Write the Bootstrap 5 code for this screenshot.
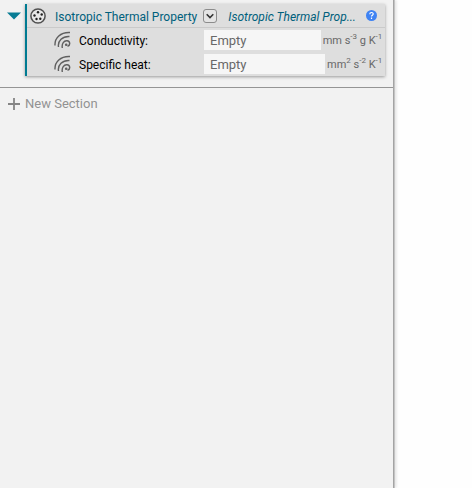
<!DOCTYPE html>
<html lang="en">
<head>
<meta charset="utf-8">
<meta name="viewport" content="width=device-width, initial-scale=1">
<title>Material properties</title>
<link href="https://cdn.jsdelivr.net/npm/bootstrap@5.3.0/dist/css/bootstrap.min.css" rel="stylesheet">
<style>
body { font-family: Roboto, "Liberation Sans", sans-serif; font-size: 13px; line-height: 16px; background: #fefefe; color: #000; }
.side-panel { background: #f2f2f2; box-shadow: 1px 0 0 #a4a4a4, 2px 0 0 #c4c4c4, 3px 0 3px #ddd; }
.section-block { padding: 4px 8px 11px 7px; border-bottom: 1px solid #959595; }
.toggle-btn { width: 18px; height: 24px; }
.prop-card { min-width: 0; background: #dedede; border-left: 2px solid #007b92; box-shadow: 0 1px 3px #999; }
.prop-head { height: 24px; padding: 0 8px 0 3px; border-bottom: 1px solid #cacaca; }
.prop-title, .prop-kind { font-size: 12px; line-height: 14px; padding-top: 2px; color: #00607c; }
.prop-title { margin-left: 9px; }
.prop-kind { font-style: italic; margin-left: 11px; }
.drop-btn { width: 14px; height: 14px; background: #e4e4e4; border: 1px solid #8c8c8c; border-radius: 3px; margin-left: 6px; }
.prop-row { height: 24px; padding: 0 3px 0 27px; }
.prop-label { width: 125px; margin-left: 8px; padding-top: 1px; font-size: 12px; }
.prop-input { min-width: 0; height: 20px; padding: 0 6px; border: 0; border-radius: 0; background: #f6f6f6; color: #666; font-size: 13px; }
.prop-input::placeholder { color: #686868; opacity: 1; }
.prop-unit { font-size: 11px; padding-top: 1px; color: #686868; margin-left: 2px; }
.prop-unit sup { font-size: 8px; top: -5px; }
.add-btn { padding: 8px; gap: 5px; font-size: 13px; line-height: 16px; color: #929292; }
</style>
</head>
<body>
<div class="d-flex min-vh-100">
  <main class="side-panel col-10">
    <section class="section-block d-flex">
      <button type="button" class="toggle-btn btn p-0 border-0 d-flex align-items-center flex-shrink-0" aria-label="Collapse section">
        <svg width="14" height="8" viewBox="0 0 14 8"><path d="M0 0.5h14L7 7.5z" fill="#087c94"/></svg>
      </button>
      <div class="prop-card flex-grow-1">
        <header class="prop-head d-flex align-items-center">
          <svg class="flex-shrink-0" width="16" height="16" viewBox="0 0 16 16"><circle cx="8" cy="8" r="7.100" fill="#e8e8e8" stroke="#505050" stroke-width="1.5"/><g fill="#222"><circle cx="8" cy="4.300" r="1.2"/><circle cx="11.700" cy="6.500" r="1.2"/><circle cx="4.500" cy="7.500" r="1.2"/><circle cx="10.300" cy="10.800" r="1.2"/><circle cx="6.500" cy="11" r="1.2"/></g></svg>
          <span class="prop-title text-nowrap">Isotropic Thermal Property</span>
          <button type="button" class="drop-btn p-0 d-flex align-items-center justify-content-center flex-shrink-0" aria-label="Property menu">
            <svg width="8" height="6" viewBox="0 0 8 6"><path d="M0.7 1.2L4 4.5l3.3-3.3" fill="none" stroke="#333" stroke-width="1.6"/></svg>
          </button>
          <span class="prop-kind text-nowrap">Isotropic Thermal Prop...</span>
          <button type="button" class="btn p-0 border-0 d-flex ms-auto flex-shrink-0" aria-label="Help">
            <svg width="11" height="11" viewBox="0 0 11 11"><circle cx="5.5" cy="5.5" r="5.5" fill="#3f83f3"/><path d="M3.8 4.3c0-2.4 3.4-2.3 3.4-.2 0 1.2-1.7 1.2-1.7 2.5M5.5 7.6v1.3" fill="none" stroke="#fff" stroke-width="1.2"/></svg>
          </button>
        </header>
        <div class="prop-row d-flex align-items-center">
          <svg class="flex-shrink-0" width="17" height="18" viewBox="0 0 17 18" fill="none" stroke="#606060" stroke-width="1.4"><path d="M1 14.500C0.500 7 6.500 1 16 1.500M4.500 16C3.500 10 8.500 5 15.500 5.500M8.300 17C7.500 12.500 10 9.500 13 9.800C16.500 10.200 16.500 14.500 13.500 15.300"/><circle cx="12.200" cy="13.800" r="0.6"/></svg>
          <label class="prop-label flex-shrink-0" for="conductivity">Conductivity:</label>
          <input class="prop-input flex-fill" id="conductivity" type="text" size="1" placeholder="Empty">
          <span class="prop-unit text-nowrap">mm s<sup>-3</sup> g K<sup>-1</sup></span>
        </div>
        <div class="prop-row d-flex align-items-center">
          <svg class="flex-shrink-0" width="17" height="18" viewBox="0 0 17 18" fill="none" stroke="#606060" stroke-width="1.4"><path d="M1 14.500C0.500 7 6.500 1 16 1.500M4.500 16C3.500 10 8.500 5 15.500 5.500M8.300 17C7.500 12.500 10 9.500 13 9.800C16.500 10.200 16.500 14.500 13.500 15.300"/><circle cx="12.200" cy="13.800" r="0.6"/></svg>
          <label class="prop-label flex-shrink-0" for="specific-heat">Specific heat:</label>
          <input class="prop-input flex-fill" id="specific-heat" type="text" size="1" placeholder="Empty">
          <span class="prop-unit text-nowrap">mm<sup>2</sup> s<sup>-2</sup> K<sup>-1</sup></span>
        </div>
      </div>
    </section>
    <button type="button" class="add-btn btn border-0 rounded-0 d-flex align-items-center">
      <svg width="12" height="12" viewBox="0 0 12 12"><path d="M6 0v12M0 6h12" stroke="#858585" stroke-width="1.8"/></svg>
      <span>New Section</span>
    </button>
  </main>
</div>
<script src="https://cdn.jsdelivr.net/npm/bootstrap@5.3.0/dist/js/bootstrap.bundle.min.js"></script>
</body>
</html>
